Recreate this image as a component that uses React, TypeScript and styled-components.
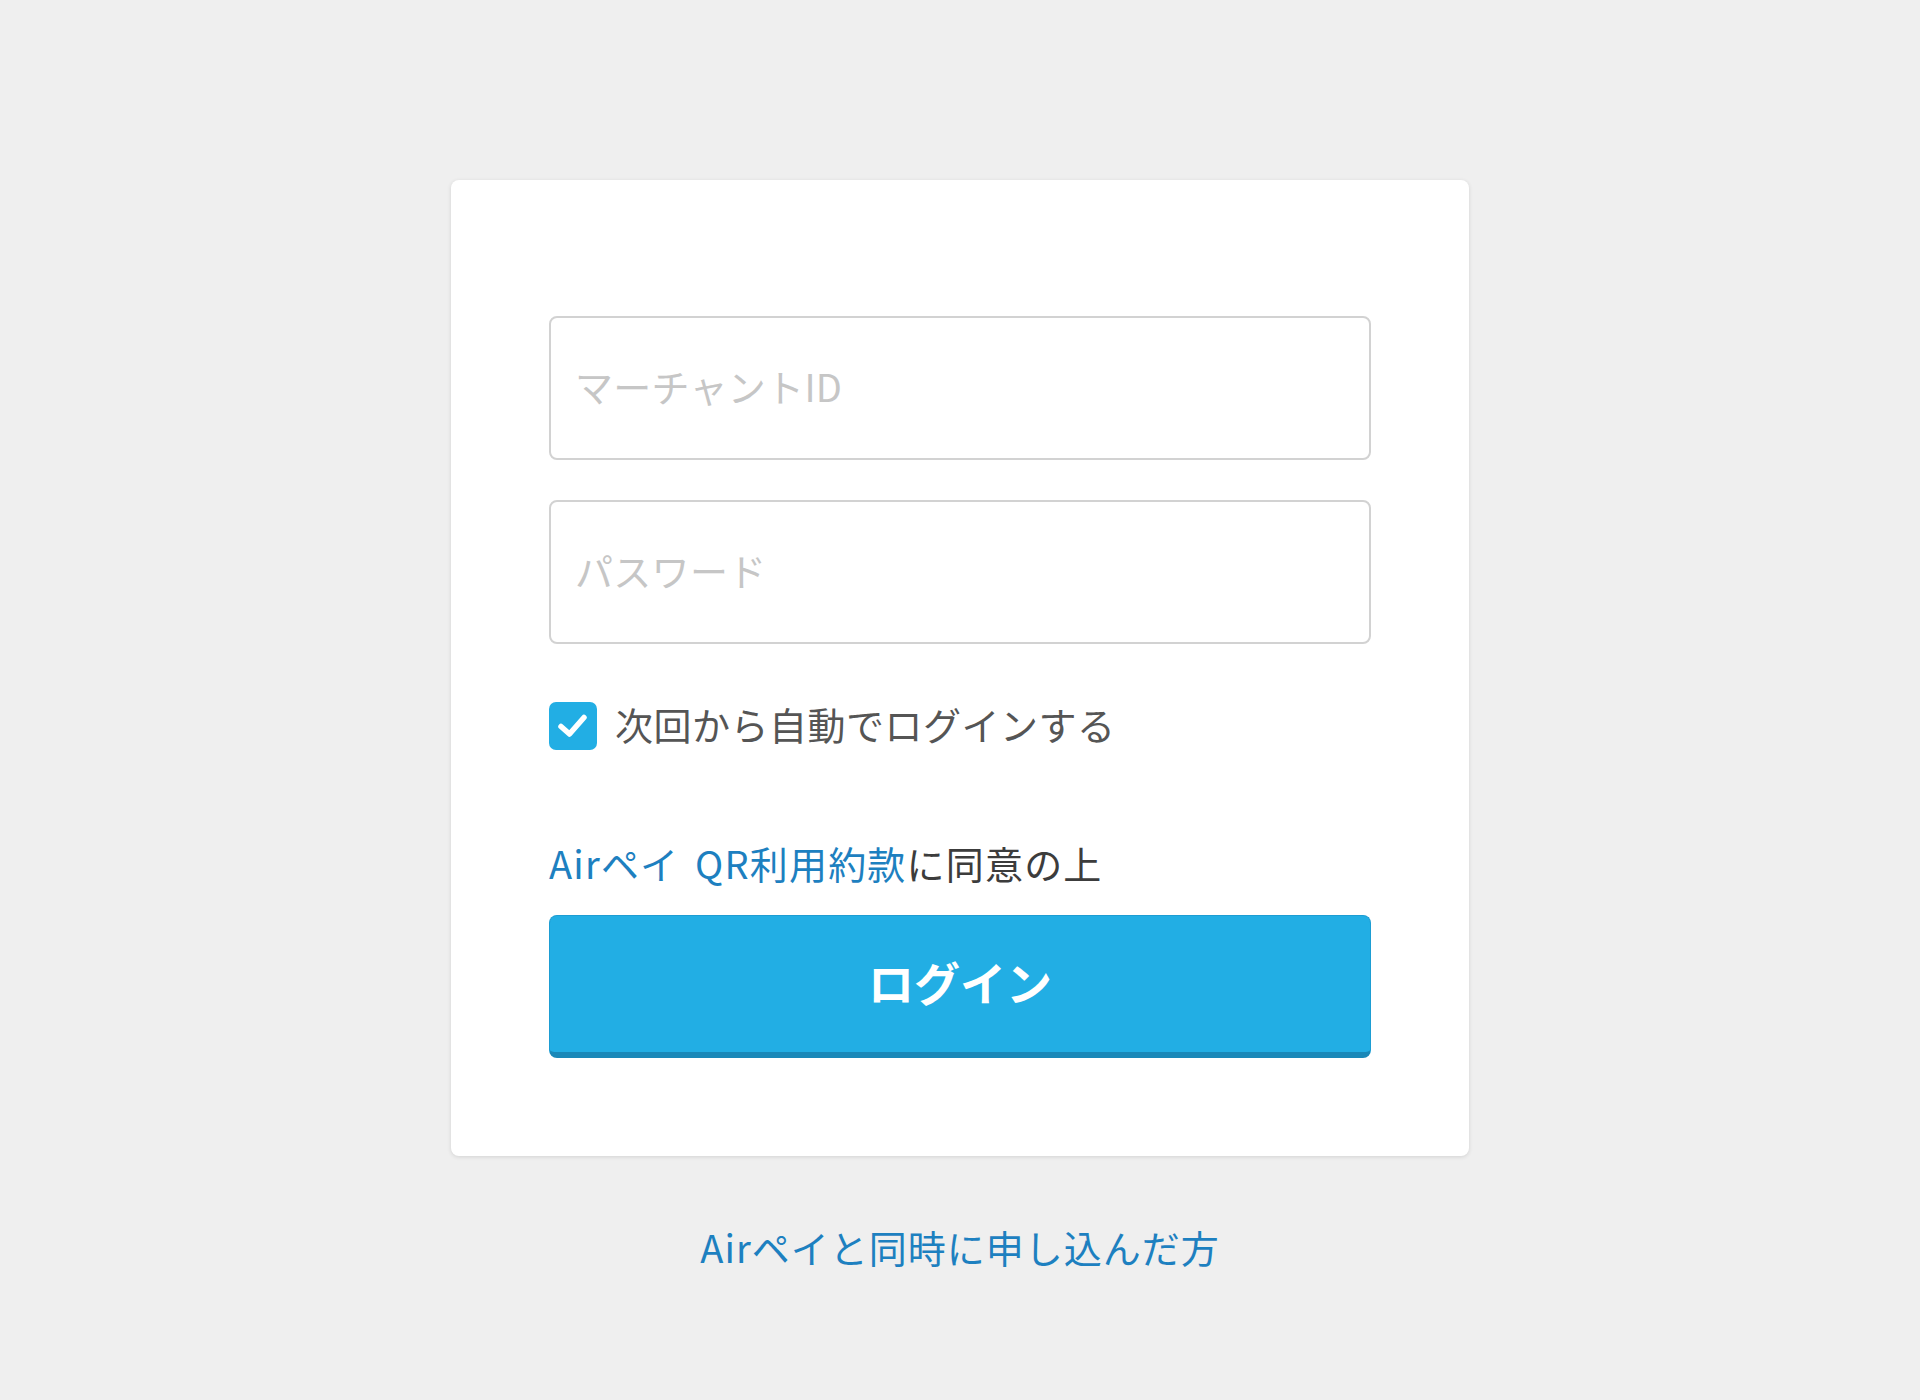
import * as React from 'react'
import styled, { createGlobalStyle } from 'styled-components'

const GlobalStyle = createGlobalStyle`
  html, body {
    margin: 0;
    padding: 0;
    background-color: #efefef;
  }
  body {
    font-family: "Noto Sans CJK JP", "Noto Sans", sans-serif;
  }
`

const Page = styled.div`
  display: flex;
  flex-direction: column;
  align-items: center;
  min-height: 1400px;
  padding-top: 180px;
  box-sizing: border-box;
`

const Card = styled.div`
  display: flex;
  flex-direction: column;
  width: 1018px;
  box-sizing: border-box;
  padding: 136px 98px 98px;
  background-color: white;
  border-radius: 8px;
  box-shadow: 0 1px 4px rgba(0, 0, 0, .12);
`

const Fields = styled.div`
  display: flex;
  flex-direction: column;
  gap: 40px;
`

const Input = styled.input`
  height: 144px;
  box-sizing: border-box;
  border: 2px solid #d2d2d2;
  border-radius: 8px;
  padding: 0 24px 5px;
  font-family: inherit;
  font-size: 38px;
  letter-spacing: 0.3px;
  color: #333;
  outline: none;

  &::placeholder {
    color: #c6c6c6;
  }
`

const CheckRow = styled.label`
  display: flex;
  align-items: center;
  gap: 18px;
  margin-top: 58px;
  height: 48px;
  cursor: pointer;
`

const CheckBox = styled.span`
  display: flex;
  align-items: center;
  justify-content: center;
  width: 48px;
  height: 48px;
  border-radius: 7px;
  background-color: #22aee4;
  flex-shrink: 0;
`

const CheckLabel = styled.span`
  font-size: 38px;
  letter-spacing: 0.5px;
  color: #555;
  line-height: 48px;
  padding-bottom: 5px;
`

const Terms = styled.p`
  margin: 87px 0 0;
  font-size: 38px;
  letter-spacing: 1.2px;
  word-spacing: 6px;
  line-height: 52px;
  color: #3c3c3c;
`

const Link = styled.a`
  color: #1d80c0;
  text-decoration: none;
`

const LoginButton = styled.button`
  margin-top: 26px;
  height: 143px;
  padding: 0 0 6px;
  border: 1px solid #1d9dd3;
  border-bottom: 6px solid #1a88b8;
  border-radius: 8px;
  background-color: #22aee4;
  color: white;
  font-family: inherit;
  font-size: 46px;
  font-weight: bold;
  cursor: pointer;
`

const BottomLink = styled.a`
  margin-top: 65px;
  font-size: 38px;
  letter-spacing: 1px;
  line-height: 52px;
  color: #1d80c0;
  text-decoration: none;
`

const App = () => {
  const [checked, setChecked] = React.useState(true)

  return (
    <Page>
      <GlobalStyle />
      <Card>
        <Fields>
          <Input type='text' placeholder='マーチャントID' />
          <Input type='password' placeholder='パスワード' />
        </Fields>

        <CheckRow onClick={() => setChecked(!checked)}>
          <CheckBox>
            {checked && (
              <svg width='48' height='48' viewBox='0 0 48 48'>
                <path d='M12 24.5 L20.5 32 L35 15.5' fill='none' stroke='white' strokeWidth='5.5' strokeLinecap='round' strokeLinejoin='round' />
              </svg>
            )}
          </CheckBox>
          <CheckLabel>次回から自動でログインする</CheckLabel>
        </CheckRow>

        <Terms>
          <Link href='#'>Airペイ QR利用約款</Link>に同意の上
        </Terms>

        <LoginButton>ログイン</LoginButton>
      </Card>

      <BottomLink href='#'>Airペイと同時に申し込んだ方</BottomLink>
    </Page>
  )
}

export default App
